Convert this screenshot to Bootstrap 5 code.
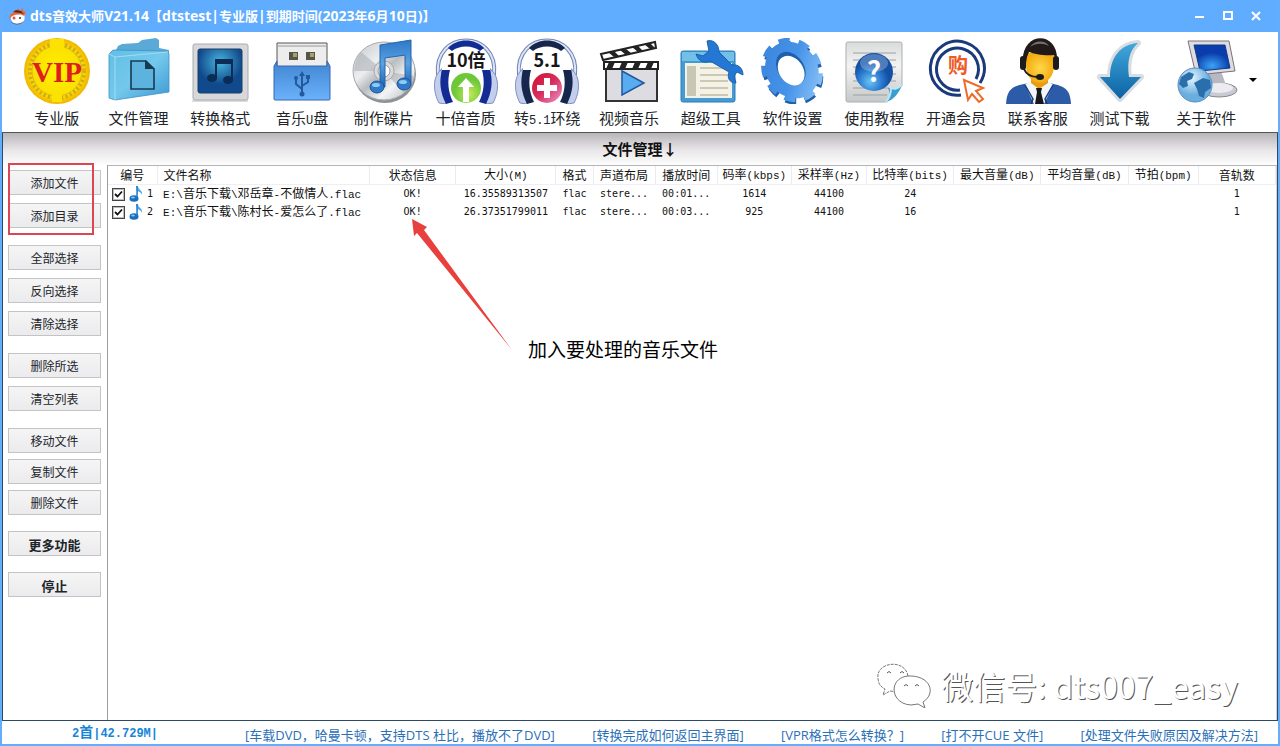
<!DOCTYPE html>
<html lang="zh-CN">
<head>
<meta charset="utf-8">
<meta name="viewport" content="width=device-width, initial-scale=1">
<title>dts音效大师</title>
<link href="https://cdn.jsdelivr.net/npm/bootstrap@5.3.0/dist/css/bootstrap.min.css" rel="stylesheet">
<style>
body{font-family:"Open Sans","Noto Sans CJK SC",sans-serif;font-size:12px;line-height:18px;color:#111;background:#fff}
button{color:inherit}
.app-window{border:2px solid #62aefd;border-top:0}
.title-bar{background:#60adff;height:32px;padding:0 8px 0 6px;font-size:13px}
.title-bar .wide{font-size:14px}
.win-btn{width:28px;height:26px;line-height:0}
.tool-bar{height:101px;padding:6px 19px 0 14px;border-bottom:1px solid #555}
.tool-item{flex:1 1 0;min-width:0;font-size:15px;line-height:20px;font-family:"Noto Sans CJK SC",sans-serif;white-space:nowrap}
.tool-item svg{width:66px;height:66px}
.tool-item .half{font-family:"Liberation Mono",monospace;font-size:12px}
.tool-last{margin-left:5px}
.caret-btn{width:12px;padding-bottom:12px!important}
.pane{border:1px solid #2b4a68;border-top:0}
.pane-head{height:32px;background:linear-gradient(#b7b5b7,#e9e7e9 55%,#fdfdfd);font-size:15px;line-height:32px}
.side{width:104px;padding:5px 6px 0 5px}
.side-btn{height:25px;border:1px solid #c4c4c6;background:linear-gradient(#f5f5f6,#ebebed);font-size:12px;line-height:18px;border-radius:0;padding:3px 0 0;width:100%;display:block}
.side-btn.strong-btn{font-size:13px;font-weight:700;padding-top:2px}
.stack-a{display:grid;gap:8px;margin-bottom:17px}
.stack-b{display:grid;gap:6px;margin-bottom:16px}
.mark-box{position:absolute;left:5px;top:-2px;width:86px;height:72px;border:2px solid #dc4650;pointer-events:none}
.list-pane{border-left:1px solid #9c9c9e;border-top:1px solid #b4b4b8;border-right:1px solid #cfd4da}
.file-grid{table-layout:fixed;width:100%;border-collapse:collapse;line-height:16px;white-space:nowrap}
.file-grid th{font-weight:400;text-align:center;padding:1px 0 0;border-right:1px solid #ececf0;border-bottom:1px solid #efeff3}
.file-grid td{text-align:center;padding:0;font-family:"DejaVu Sans Mono","Noto Sans CJK SC",monospace;font-size:10px;height:18px}
.file-grid th.lead-cell,.file-grid td.lead-cell{text-align:left;padding-left:6px}
.file-grid td.path-cell{font-size:12px;font-family:"Noto Sans CJK SC",sans-serif}
.file-grid .half,.path-cell .half{font-family:"Liberation Mono",monospace;font-size:11px}
.c-num{width:49px}.c-name{width:212px}.c-state{width:86px}.c-size{width:100px}.c-fmt{width:37px}
.c-mid{width:62px}.c-rate{width:74px}.c-hz{width:75px}.c-vol{width:87px}.c-bpm{width:70px}.c-trk{width:77px}
.tick{appearance:none;width:13px;height:13px;margin:0;border:1px solid #444;outline:1px solid #bbb;outline-offset:-2px;background:#fff url("data:image/svg+xml,%3Csvg xmlns='http://www.w3.org/2000/svg' viewBox='0 0 11 11'%3E%3Cpath d='M2 5l2.500 2.500L9 2.500' fill='none' stroke='%23111' stroke-width='1.800'/%3E%3C/svg%3E")}
.hint{position:absolute;left:304px;top:53px;display:flex}
.hint-text{font-size:19px;line-height:24px;margin:119px 0 0 15px;color:#000}
.wm{position:absolute;right:38px;bottom:12px;color:#fff;font-size:32px;line-height:44px;font-family:"Noto Sans CJK SC",sans-serif;font-weight:400;text-shadow:1px 1px 0 #555}
.foot-bar{height:23px}
.foot-count{width:226px;padding-top:1px;font-size:14px;color:#1685d8;font-weight:700;font-family:"Noto Sans CJK SC",sans-serif}
.foot-count .half{font-family:"Liberation Mono",monospace;font-size:12px}
.foot-links{padding:5px 20px 0 17px;font-size:13px}
.foot-links a{color:#2a70b8;text-decoration:none;white-space:nowrap}
</style>
</head>
<body>
<svg width="0" height="0" class="position-absolute" aria-hidden="true">
<defs>
<radialGradient id="gGold"><stop offset="0" stop-color="#fff200"/><stop offset=".75" stop-color="#fbe000"/><stop offset="1" stop-color="#f0b400"/></radialGradient>
<linearGradient id="gFold" x2="1" y2="1"><stop offset="0" stop-color="#62bfe6"/><stop offset=".5" stop-color="#73c8ec"/><stop offset="1" stop-color="#3d97d4"/></linearGradient>
<linearGradient id="gSilver" x2="1" y2="1"><stop offset="0" stop-color="#c3c6cb"/><stop offset=".35" stop-color="#eceef0"/><stop offset=".5" stop-color="#b9bcc0"/><stop offset=".7" stop-color="#f3f4f5"/><stop offset="1" stop-color="#aeb1b5"/></linearGradient>
<radialGradient id="gDeep" cy=".3"><stop offset="0" stop-color="#48b4dc"/><stop offset="1" stop-color="#114a8c"/></radialGradient>
<linearGradient id="gBlue" x2="0" y2="1"><stop offset="0" stop-color="#3f84cf"/><stop offset="1" stop-color="#6bb2fb"/></linearGradient>
<linearGradient id="gNote" x2="0" y2="1"><stop offset="0" stop-color="#2d78c8"/><stop offset=".5" stop-color="#5aa2e2"/><stop offset="1" stop-color="#1f62ae"/></linearGradient>
<radialGradient id="gGreen" cx=".6" cy=".7"><stop offset="0" stop-color="#c5ea58"/><stop offset="1" stop-color="#6cc838"/></radialGradient>
<linearGradient id="gRed" x2="1" y2="1"><stop offset="0" stop-color="#d01030"/><stop offset=".5" stop-color="#d82e5e"/><stop offset="1" stop-color="#ee9ad0"/></linearGradient>
<linearGradient id="gGear" gradientUnits="userSpaceOnUse" x1="10" y1="5" x2="55" y2="60"><stop offset="0" stop-color="#3c86dc"/><stop offset=".5" stop-color="#4592e8"/><stop offset="1" stop-color="#8cc4f8"/></linearGradient>
<radialGradient id="gBall" cx=".4" cy=".75"><stop offset="0" stop-color="#6cc4f4"/><stop offset=".6" stop-color="#2b7cd0"/><stop offset="1" stop-color="#1450a4"/></radialGradient>
<linearGradient id="gPaper" x2="0" y2="1"><stop offset="0" stop-color="#d9dcdb"/><stop offset=".4" stop-color="#f3f3f2"/><stop offset="1" stop-color="#c4c8c8"/></linearGradient>
<linearGradient id="gDown" x2="0" y2="1"><stop offset="0" stop-color="#42a8dc"/><stop offset="1" stop-color="#0b62a4"/></linearGradient>
<radialGradient id="gFace"><stop offset="0" stop-color="#ffd84c"/><stop offset="1" stop-color="#f4ac10"/></radialGradient>
<radialGradient id="gScreen" cy=".8"><stop offset="0" stop-color="#3aa4f4"/><stop offset="1" stop-color="#0a3cac"/></radialGradient>
<radialGradient id="gGlobe" cx=".4" cy=".3"><stop offset="0" stop-color="#e4f6ff"/><stop offset="1" stop-color="#6aaede"/></radialGradient>
<symbol id="phones" viewBox="0 0 66 66">
<path d="M5 37C0-9 66-9 61 37" fill="none" stroke="#6f86b8" stroke-width="4"/><path d="M5 37C0-9 66-9 61 37" fill="none" stroke="#dfe5f5" stroke-width="2"/>
<path d="M15 10C24 0 42 0 51 10l-4 3C40 7 26 7 19 13z" fill="currentColor"/>
<path d="M9 31C-1 38 0 54 6 65l7 1L8 31z" fill="#c3cdec" stroke="#7e90c4"/><path d="M57 31c10 7 9 23 3 34l-7 1 5-35z" fill="#c3cdec" stroke="#7e90c4"/>
<path d="M9 32l8 0c-3 11-2 22 3 32l-7 2C7 54 6 43 9 32z" fill="currentColor"/><path d="M57 32l-8 0c3 11 2 22-3 32l7 2c6-12 7-23 4-34z" fill="currentColor"/>
</symbol>
<symbol id="tune" viewBox="0 0 14 16"><path d="M7 0h2c0 4 5 4 4 9-1-3-3-3-4-4v7" fill="#4aa8e8"/><ellipse cx="5" cy="12.500" rx="4.500" ry="3.200" fill="#1b6dbd"/><path d="M8 0v12" stroke="#1f7ccc" stroke-width="1.400"/><ellipse cx="4" cy="11.600" rx="2" ry="1" fill="#79c6f2"/></symbol>
</defs>
</svg>

<div class="app-window min-vh-100 d-flex flex-column">
<header class="title-bar d-flex align-items-center text-white">
<svg width="18" height="18" viewBox="0 0 18 18" class="me-1"><path d="M3 8C2 14 5 17 10 17s8-4 6-10z" fill="#fff"/><path d="M1 12C2 6 6 5 9 4l1-3 2 3 3-3 0 3 3 1-2 4C12 6 5 7 1 12z" fill="#f0662c"/><path d="M5 5l3-2 5 1 3 3-4-1z" fill="#5c2a20"/><circle cx="6" cy="11" r="1.500" fill="#e85040"/><circle cx="12" cy="11" r="1" fill="#333"/><path d="M2 14c3 3 9 4 14 0-2 4-11 5-14 0z" fill="#555"/></svg>
<strong class="text-nowrap"><span class="wide">dts</span>音效大师<span class="wide">V21.14</span>【<span class="wide">dtstest|</span>专业版<span class="wide">|</span>到期时间<span class="wide">(2023</span>年<span class="wide">6</span>月<span class="wide">10</span>日<span class="wide">)</span>】</strong>
<div class="ms-auto d-flex">
<button type="button" class="win-btn btn p-0 border-0" aria-label="最小化"><svg width="12" height="12"><path d="M1 7h9" stroke="#fff" stroke-width="2"/></svg></button>
<button type="button" class="win-btn btn p-0 border-0" aria-label="最大化"><svg width="12" height="12"><path d="M2 2h8v7H2z" fill="none" stroke="#fff" stroke-width="2"/></svg></button>
<button type="button" class="win-btn btn p-0 border-0" aria-label="关闭"><svg width="12" height="12"><path d="M2 2l8 8M10 2l-8 8" stroke="#fff" stroke-width="2"/></svg></button>
</div>
</header>

<nav class="tool-bar d-flex align-items-start">
<button type="button" class="tool-item btn p-0 border-0 rounded-0"><svg viewBox="0 0 66 66"><circle cx="33" cy="33" r="33" fill="url(#gGold)"/><circle cx="33" cy="33" r="27" fill="none" stroke="#d0a81c" stroke-width="4" stroke-dasharray="2 2.500"/><circle cx="33" cy="33" r="25" fill="none" stroke="#dcb820"/><path d="M26 1h14v13H26zM28 54h10v10H28z" fill="#fbe200"/><text x="33" y="44" text-anchor="middle" font-family="Liberation Serif" font-weight="700" font-size="29" fill="#dc1e1e">VIP</text></svg><span class="d-block mt-1">专业版</span></button>
<button type="button" class="tool-item btn p-0 border-0 rounded-0"><svg viewBox="0 0 66 66"><path d="M8 16l4-8 4-2 16-1 4-3 14-2 3 2v8l10 2v38H8z" fill="#5aa9d6"/><path d="M3 16l4-4 54 1 2 3v38L9 62l-6-2z" fill="url(#gFold)" stroke="#3c92c4" stroke-width=".8"/><path d="M3 16l6 3 53-5M9 19v43" fill="none" stroke="#a3dcf2"/><path d="M25 23h15l8 8v20H25z" fill="#5cb4de" stroke="#173a50" stroke-width="1.600"/><path d="M39 22v9h10z" fill="#173a50"/></svg><span class="d-block mt-1">文件管理</span></button>
<button type="button" class="tool-item btn p-0 border-0 rounded-0"><svg viewBox="0 0 66 66"><path d="M5 62h56v2H5z" fill="#ddd"/><rect x="6" y="6" width="55" height="56" rx="2" fill="#d6d8dc" stroke="#aaa"/><rect x="11" y="11" width="44" height="44" rx="2" fill="url(#gDeep)" stroke="#1c3f66"/><path d="M29 41V22h16v20" fill="none" stroke="#0b2c54" stroke-width="2"/><path d="M29 24h16" stroke="#0b2c54" stroke-width="4"/><ellipse cx="25" cy="40" rx="5" ry="4" fill="#0b2c54"/><ellipse cx="41" cy="42" rx="5" ry="4" fill="#0b2c54"/></svg><span class="d-block mt-1">转换格式</span></button>
<button type="button" class="tool-item btn p-0 border-0 rounded-0"><svg viewBox="0 0 66 66"><path d="M8 5h50v24H8z" fill="#ededee" stroke="#555"/><path d="M9 8h48" stroke="#999"/><path d="M20 14h9v8h-9zM37 14h9v8h-9z" fill="#55554c"/><path d="M24 15h4v4h-4zM41 15h4v4h-4z" fill="#a4a068"/><path d="M8 23v5h50v-5l3 5v33q0 1-1 1H6q-1 0-1-1V28z" fill="url(#gBlue)" stroke="#3569b0"/><g fill="none" stroke="#235a9e" stroke-width="2"><path d="M33 37v19M33 51l-6-5v-5M33 48l6-4v-5"/></g><path d="M33 33l-3 5h6zM37 37h4v4h-4z" fill="#235a9e"/><circle cx="27" cy="40" r="2" fill="#235a9e"/><circle cx="33" cy="56" r="2.500" fill="#235a9e"/></svg><span class="d-block mt-1">音乐<span class="half">U</span>盘</span></button>
<button type="button" class="tool-item btn p-0 border-0 rounded-0"><svg viewBox="0 0 66 66"><ellipse cx="34" cy="36" rx="31" ry="29" fill="#8e9296"/><ellipse cx="33" cy="33" rx="31" ry="29" fill="url(#gSilver)" stroke="#a9acaf"/><path d="M33 33L10 14Q4 22 3 33zM33 33l20 22q8-6 10-17z" fill="#a9adb3" opacity=".55"/><circle cx="33" cy="33" r="10" fill="#d9dbdd" stroke="#aaa"/><circle cx="33" cy="33" r="6" fill="#fff" stroke="#999"/><path d="M29 7l31-5v43h-6V17l-20 3v29h-5z" fill="url(#gNote)" stroke="#2466ac"/><ellipse cx="26" cy="49" rx="7" ry="6" fill="#2f79c8" stroke="#1c5598"/><ellipse cx="53" cy="46" rx="7" ry="6" fill="#2f79c8" stroke="#1c5598"/><ellipse cx="25" cy="47" rx="4" ry="2" fill="#8ecbf4"/><ellipse cx="52" cy="44" rx="4" ry="2" fill="#8ecbf4"/></svg><span class="d-block mt-1">制作碟片</span></button>
<button type="button" class="tool-item btn p-0 border-0 rounded-0"><svg viewBox="0 0 66 66"><use href="#phones" color="#122c94"/><circle cx="33" cy="50" r="15" fill="url(#gGreen)"/><path d="M33 40l8 9h-5v15h-6V49h-5z" fill="#fff"/><text x="33" y="29" text-anchor="middle" font-weight="700" font-size="18" fill="#161616">10倍</text></svg><span class="d-block mt-1">十倍音质</span></button>
<button type="button" class="tool-item btn p-0 border-0 rounded-0"><svg viewBox="0 0 66 66"><use href="#phones" color="#16264c"/><circle cx="33" cy="50" r="15" fill="url(#gRed)"/><path d="M30 40h6v7h7v6h-7v7h-6v-7h-7v-6h7z" fill="#fff"/><text x="33" y="29" text-anchor="middle" font-weight="700" font-size="18" fill="#161616">5.1</text></svg><span class="d-block mt-1">转<span class="half">5.1</span>环绕</span></button>
<button type="button" class="tool-item btn p-0 border-0 rounded-0"><svg viewBox="0 0 66 66"><path d="M10 30h51v33H10z" fill="#dddde1" stroke="#333" stroke-width="2"/><path d="M5 16L59 4l1 6L7 22z" fill="#fff" stroke="#222" stroke-width="2"/><path d="M12 14l6 5 5-1-5-5zM24 12l6 5 5-2-5-4zM36 9l6 5 5-1-5-5zM48 6l6 5 5-1-5-5z" fill="#222"/><path d="M8 24h54v7H8z" fill="#fff" stroke="#222" stroke-width="2"/><path d="M13 24l-3 7h6l3-7zM26 24l-3 7h6l3-7zM39 24l-3 7h6l3-7zM52 24l-3 7h6l3-7z" fill="#222"/><path d="M26 33l22 12-22 12z" fill="#58acf0" stroke="#2257a0" stroke-width="1.500"/></svg><span class="d-block mt-1">视频音乐</span></button>
<button type="button" class="tool-item btn p-0 border-0 rounded-0"><svg viewBox="0 0 66 66"><rect x="3" y="13" width="54" height="51" rx="2" fill="#459bd4" stroke="#2c7cb8"/><path d="M4 14h52v9H4z" fill="#72bfe8"/><path d="M7 25h47v35H7z" fill="#f4f2e6"/><path d="M9 28h9v30H9z" fill="#c9c6b4"/><path d="M22 30h28M22 37h28M22 43h28M22 50h28M22 57h28" stroke="#cdc8b4" stroke-width="2"/><path d="M29 3c7-2 12 4 12 11l13 13c6-1 11 3 11 10l-6-3-3 4 2 7c-7 0-9-6-7-11L32 23c-6 3-12 0-14-7l7 2 6-5z" fill="#2478d4" stroke="#1d61aa"/></svg><span class="d-block mt-1">超级工具</span></button>
<button type="button" class="tool-item btn p-0 border-0 rounded-0"><svg viewBox="0 0 66 66"><g transform="rotate(-35 33 32)" fill="none"><ellipse cx="32" cy="35" rx="25" ry="29" stroke="#2460a8" stroke-width="8" pathLength="180" stroke-dasharray="11 9"/><ellipse cx="33" cy="32" rx="25" ry="29" stroke="url(#gGear)" stroke-width="9" pathLength="180" stroke-dasharray="11 9"/><ellipse cx="33" cy="32" rx="18" ry="22" stroke="url(#gGear)" stroke-width="15"/><ellipse cx="33" cy="30" rx="13" ry="18" fill="#1f5fae"/><ellipse cx="32" cy="32" rx="12" ry="16" fill="#fff"/></g></svg><span class="d-block mt-1">软件设置</span></button>
<button type="button" class="tool-item btn p-0 border-0 rounded-0"><svg viewBox="0 0 66 66"><path d="M5 6q0-2 2-2h52q2 0 2 2v42L46 64H7q-2 0-2-2z" fill="url(#gPaper)" stroke="#aab0b0"/><path d="M12 15h43M12 22h43M12 29h43M12 36h43M12 43h43M12 50h36M12 57h34" stroke="#9aa0a0"/><path d="M61 47c-6 5-8 4-14 3 2 5 2 10-2 14 8-2 13-9 16-17z" fill="#3c9ed0"/><path d="M61 47c-6 5-8 4-11 3 0 5-1 9-5 14" fill="none" stroke="#bfe6f5" stroke-width="2"/><circle cx="33" cy="34" r="19" fill="url(#gBall)"/><ellipse cx="33" cy="25" rx="14" ry="9" fill="#fff" opacity=".25"/><text x="33" y="44" text-anchor="middle" font-weight="700" font-size="28" fill="#fff">?</text></svg><span class="d-block mt-1">使用教程</span></button>
<button type="button" class="tool-item btn p-0 border-0 rounded-0"><svg viewBox="0 0 66 66"><g fill="none" stroke="#1b3a7c"><path d="M38 57A27 27 0 1 1 57 45" stroke-width="3"/><path d="M37 52A21 21 0 1 1 53 41" stroke-width="3"/></g><text x="35" y="35" text-anchor="middle" font-size="20" font-weight="700" fill="#ee5a26">购</text><path d="M41 42l19 8-7 3 7 8-4 3-7-8-4 6z" fill="#fff" stroke="#ee6a2a" stroke-width="2"/></svg><span class="d-block mt-1">开通会员</span></button>
<button type="button" class="tool-item btn p-0 border-0 rounded-0"><svg viewBox="0 0 66 66"><path d="M1 66C2 50 8 48 24 45h20c16 3 21 6 22 21z" fill="#2c5ca8"/><path d="M23 44l-3 3 9 19h10l9-19-3-3z" fill="#f2f5fa"/><path d="M26 38h17v7l-9 6-8-6z" fill="#e89c10"/><path d="M31 50h6l-1 4 3 12h-9l2-12z" fill="#16181c"/><path d="M21 15h28v12c0 24-28 24-28 0z" fill="url(#gFace)"/><path d="M18 25C15-7 55-9 52 25l-3-8c-9 1-20-1-25-3l-2 5-1 6z" fill="#221a1a"/><path d="M25 9C30 2 40 2 44 8c-6-3-13-3-19 1z" fill="#75706e"/><rect x="15" y="18" width="6" height="14" rx="3" fill="#1c1c1c"/><rect x="48" y="18" width="6" height="14" rx="3" fill="#1c1c1c"/><path d="M19 31c2 5 7 8 14 8" fill="none" stroke="#1c1c1c" stroke-width="2"/><ellipse cx="35" cy="39" rx="4" ry="3" fill="#1c1c1c"/><path d="M20 47l8 14-2 5M48 47l-8 14 2 5" fill="none" stroke="#183c7c" stroke-width="1.500"/></svg><span class="d-block mt-1">联系客服</span></button>
<button type="button" class="tool-item btn p-0 border-0 rounded-0"><svg viewBox="0 0 66 66"><path d="M52 5C35 6 24 19 24 39H14l20 22 21-22H43C41 24 43 13 52 5z" fill="url(#gDown)" stroke="#d9dde0" stroke-width="6" stroke-linejoin="round"/><path d="M52 5C35 6 24 19 24 39H14l20 22 21-22H43C41 24 43 13 52 5z" fill="url(#gDown)"/></svg><span class="d-block mt-1">测试下载</span></button>
<button type="button" class="tool-item tool-last btn p-0 border-0 rounded-0"><svg viewBox="0 0 66 66"><ellipse cx="46" cy="52" rx="18" ry="7" fill="#c9cbd2" stroke="#85868e"/><path d="M34 35l14-2 5 14-15 4z" fill="#b6b8c2"/><ellipse cx="46" cy="50" rx="14" ry="5" fill="#ebebf0"/><path d="M15 3h41l6 30-39 4z" fill="#dcdce2" stroke="#80707a"/><path d="M21 7h31l5 23-30 3z" fill="url(#gScreen)" stroke="#173a7c"/><circle cx="22" cy="47" r="17" fill="url(#gGlobe)" stroke="#5a8cc0"/><path d="M8 39l8-5 5 2-2 5-5 2 1 5-5 2-4-4zM21 45l9-5 7 2 1 8-6 4-1 6-5-2-2-7z" fill="#2b6eac"/></svg><span class="d-block mt-1">关于软件</span></button>
<button type="button" class="caret-btn btn p-0 border-0 align-self-stretch" aria-label="更多"><svg width="8" height="5"><path d="M0 0h8L4 4z" fill="#000"/></svg></button>
</nav>

<main class="pane flex-grow-1 d-flex flex-column">
<h1 class="pane-head m-0 text-center fw-bold">文件管理↓</h1>
<div class="d-flex flex-grow-1">
<aside class="side position-relative flex-shrink-0">
<div class="stack-a"><button type="button" class="btn side-btn">添加文件</button><button type="button" class="btn side-btn">添加目录</button></div>
<div class="stack-a"><button type="button" class="btn side-btn">全部选择</button><button type="button" class="btn side-btn">反向选择</button><button type="button" class="btn side-btn">清除选择</button></div>
<div class="stack-a"><button type="button" class="btn side-btn">删除所选</button><button type="button" class="btn side-btn">清空列表</button></div>
<div class="stack-b"><button type="button" class="btn side-btn">移动文件</button><button type="button" class="btn side-btn">复制文件</button><button type="button" class="btn side-btn">删除文件</button></div>
<div class="stack-b"><button type="button" class="btn side-btn strong-btn">更多功能</button></div>
<div class="stack-b"><button type="button" class="btn side-btn strong-btn">停止</button></div>
<div class="mark-box"></div>
</aside>
<section class="list-pane flex-grow-1 position-relative">
<table class="file-grid">
<colgroup><col class="c-num"><col class="c-name"><col class="c-state"><col class="c-size"><col class="c-fmt"><col class="c-mid"><col class="c-mid"><col class="c-rate"><col class="c-hz"><col class="c-vol"><col class="c-vol"><col class="c-vol"><col class="c-bpm"><col class="c-trk"></colgroup>
<thead><tr><th>编号</th><th class="lead-cell">文件名称</th><th>状态信息</th><th>大小<span class="half">(M)</span></th><th>格式</th><th>声道布局</th><th>播放时间</th><th>码率<span class="half">(kbps)</span></th><th>采样率<span class="half">(Hz)</span></th><th>比特率<span class="half">(bits)</span></th><th>最大音量<span class="half">(dB)</span></th><th>平均音量<span class="half">(dB)</span></th><th>节拍<span class="half">(bpm)</span></th><th>音轨数</th></tr></thead>
<tbody>
<tr><td><div class="d-flex align-items-center ps-1 gap-1"><input type="checkbox" class="tick" id="f1" checked><svg width="14" height="16"><use href="#tune"/></svg><label for="f1">1</label></div></td><td class="lead-cell path-cell"><span class="half">E:\</span>音乐下载<span class="half">\</span>邓岳章<span class="half">-</span>不做情人<span class="half">.flac</span></td><td>OK!</td><td>16.35589313507</td><td>flac</td><td>stere...</td><td>00:01...</td><td>1614</td><td>44100</td><td>24</td><td></td><td></td><td></td><td>1</td></tr>
<tr><td><div class="d-flex align-items-center ps-1 gap-1"><input type="checkbox" class="tick" id="f2" checked><svg width="14" height="16"><use href="#tune"/></svg><label for="f2">2</label></div></td><td class="lead-cell path-cell"><span class="half">E:\</span>音乐下载<span class="half">\</span>陈村长<span class="half">-</span>爱怎么了<span class="half">.flac</span></td><td>OK!</td><td>26.37351799011</td><td>flac</td><td>stere...</td><td>00:03...</td><td>925</td><td>44100</td><td>16</td><td></td><td></td><td></td><td>1</td></tr>
</tbody>
</table>
<div class="hint"><svg width="101" height="132" viewBox="0 0 101 132"><path d="M0 0l15 8-3 3 88 120L5 14l-3 3z" fill="#e8403c"/></svg><span class="hint-text">加入要处理的音乐文件</span></div>
<div class="wm d-flex align-items-center gap-2"><svg width="56" height="46" viewBox="0 0 56 46" fill="#fff" stroke="#777"><path d="M31 14C28-4-2 0 1 17c1 6 3 8 7 10l-2 6 7-4 8 1" stroke-dasharray="3 1"/><path d="M31 14c-20 2-18 28 3 29l7-1 7 4-2-6c14-9 7-27-15-26z"/><path d="M10 11q2-3 4 0M23 11q2-3 4 0M27 24q2-3 4 0M38 24q2-3 4 0" fill="none" stroke="#555"/></svg><span>微信号: dts007_easy</span></div>
</section>
</div>
</main>

<footer class="foot-bar d-flex">
<div class="foot-count text-center flex-shrink-0"><span class="half">2</span>首<span class="half">|42.729M|</span></div>
<div class="foot-links flex-grow-1 d-flex justify-content-between">
<a href="#">[车载DVD，哈曼卡顿，支持DTS 杜比，播放不了DVD]</a><a href="#">[转换完成如何返回主界面]</a><a href="#">[VPR格式怎么转换？]</a><a href="#">[打不开CUE 文件]</a><a href="#">[处理文件失败原因及解决方法]</a>
</div>
</footer>
</div>
<script src="https://cdn.jsdelivr.net/npm/bootstrap@5.3.0/dist/js/bootstrap.bundle.min.js"></script>
</body>
</html>
